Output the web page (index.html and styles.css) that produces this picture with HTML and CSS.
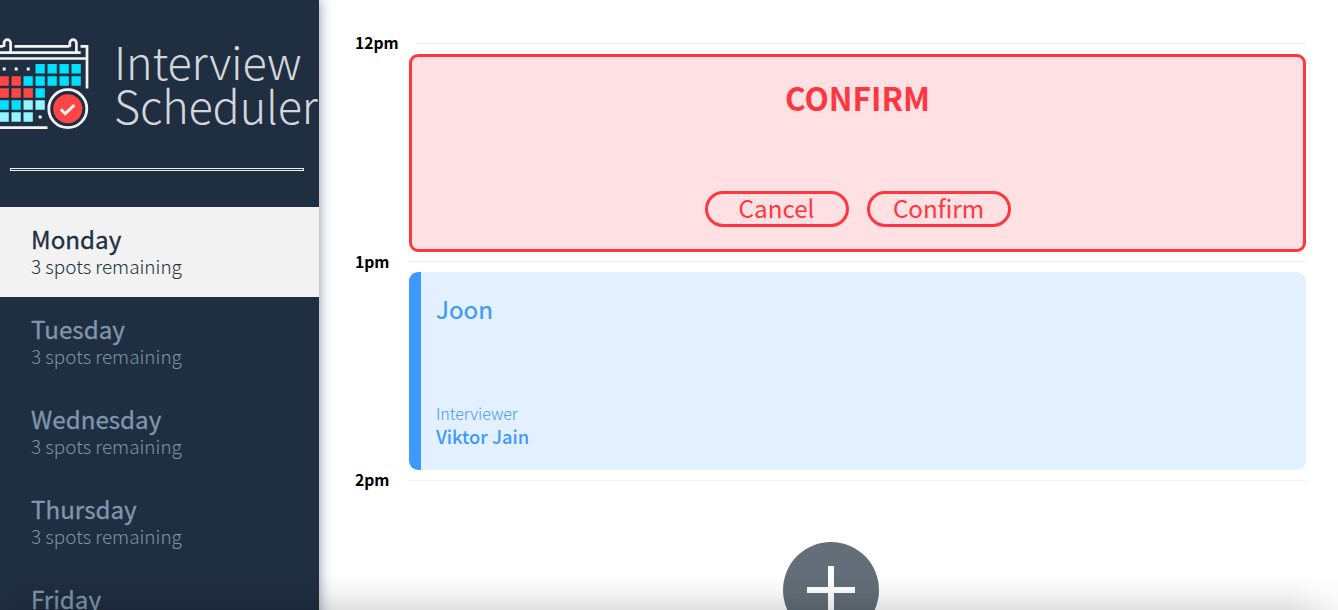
FILE: index.html
```html
<!DOCTYPE html>
<html lang="en">
<head>
<meta charset="utf-8">
<title>Interview Scheduler</title>
<link rel="stylesheet" href="styles.css">
</head>
<body>
<div class="layout">
  <aside class="sidebar">
    <svg class="logo" width="319" height="110" viewBox="0 30 319 110" role="img" aria-label="Interview Scheduler">
      <g fill="none" stroke="#f2f2f2" stroke-width="2.7">
        <path d="M0 46.3H3M14.5 46.3H69.5M80.5 46.3H87V88.5M0 52.7H80.7M0 58.5H86M0 127.7H47.5"/>
        <path d="M4 47V43a3.3 3.3 0 0 1 6.600 0V52M69.800 47V43a3.300 3.300 0 0 1 6.600 0V52"/>
      </g>
      <g fill="#f2f2f2"><path d="M2.700 67.500h3v3h-3zM14.700 67.500h3v3h-3zM26.700 67.500h3v3h-3zM38.700 115.500h3v3h-3z"/></g>
      <path fill="#00e1ff" d="M35.500 64h9.300v9.600h-9.300zM47.500 64h9.300v9.600h-9.300zM59.500 64h9.300v9.600h-9.300zM71.500 64h9.300v9.600h-9.300zM23.500 76.200h9.300v9.600h-9.300zM35.500 76.200h9.300v9.600h-9.300zM47.500 76.200h9.300v9.600h-9.300zM59.500 76.200h9.300v9.600h-9.300zM71.500 76.200h9.300v9.600h-9.300zM35.500 88.200h9.300v9.600h-9.300zM0 100.200h8.800v9.600h-8.800zM11.500 100.200h9.300v9.600h-9.300z"/>
      <path fill="#ff4545" d="M0 76.200h8.800v9.600h-8.800zM11.500 76.200h9.300v9.600h-9.300zM0 88.200h8.800v9.600h-8.800zM11.500 88.200h9.300v9.600h-9.300zM23.500 88.200h9.300v9.600h-9.300z"/>
      <path fill="#93f5ff" d="M23.500 100.200h9.300v9.600h-9.300zM35.500 100.200h9.300v9.600h-9.300zM0 112.200h8.800v9.600h-8.800zM11.500 112.200h9.300v9.600h-9.300zM23.500 112.200h9.300v9.600h-9.300z"/>
      <circle cx="67.800" cy="108.700" r="19" fill="#202e41" stroke="#f2f2f2" stroke-width="2.800"/>
      <circle cx="67.800" cy="108.700" r="14.500" fill="#ff4545"/>
      <path d="M60.800 109.300L65.300 113.700L74.300 105" fill="none" stroke="#f2f2f2" stroke-width="3"/>
      <text class="logo-text" x="114" y="80" textLength="187.500">Interview</text>
      <text class="logo-text" x="114" y="123.500" textLength="204">Scheduler</text>
    </svg>
    <hr class="separator">
    <nav class="days">
      <div class="day day-selected"><div class="day-name">Monday</div><div class="day-spots">3 spots remaining</div></div>
      <div class="day"><div class="day-name">Tuesday</div><div class="day-spots">3 spots remaining</div></div>
      <div class="day"><div class="day-name">Wednesday</div><div class="day-spots">3 spots remaining</div></div>
      <div class="day"><div class="day-name">Thursday</div><div class="day-spots">3 spots remaining</div></div>
      <div class="day"><div class="day-name">Friday</div></div>
    </nav>
  </aside>
  <main class="schedule">
    <div class="time time-first"><span>12pm</span><i class="rule"></i></div>
    <section class="card confirm">
      <h1 class="confirm-title">CONFIRM</h1>
      <div class="actions"><button class="button">Cancel</button><button class="button">Confirm</button></div>
    </section>
    <div class="time time-raised"><span>1pm</span><i class="rule"></i></div>
    <section class="card appointment">
      <h2 class="student">Joon</h2>
      <div class="label">Interviewer</div>
      <div class="interviewer">Viktor Jain</div>
    </section>
    <div class="time"><span>2pm</span><i class="rule"></i></div>
    <div class="empty">
      <svg width="96" height="96" viewBox="0 0 96 96"><circle cx="48" cy="48" r="48" fill="#636e78"/><path d="M48 24V72M24 48H72" stroke="#fff" stroke-width="6"/></svg>
    </div>
  </main>
</div>
<div class="bottom-shade"></div>
</body>
</html>
```
FILE: styles.css
```css
* { box-sizing: border-box; }
body { margin: 0; height: 610px; overflow: hidden; background: #fff; font-family: "Noto Sans CJK SC", "Noto Sans CJK JP", sans-serif; }
.layout { display: flex; height: 610px; overflow: hidden; }
.sidebar { flex: none; width: 319px; height: 720px; padding-top: 30px; background: #202e41; box-shadow: 0 0 12px rgba(20, 30, 50, .5); }
.logo { display: block; }
.logo-text { font-size: 45px; font-weight: 300; fill: #d3d6da; }
.separator { margin: 28px 15px 36px 10px; height: 3px; border: 1px solid #f2f2f2; }
.day { height: 90px; padding: 15px 31px 0; color: #7f97ad; }
.day-selected { background: #f2f2f2; color: #202e41; }
.day-name { font-size: 24.200px; line-height: 33px; font-weight: 400; -webkit-text-stroke: .3px currentColor; }
.day-spots { font-size: 18.900px; font-weight: 300; line-height: 22px; }
.day:not(.day-selected) .day-spots { color: #7c94a4; }
.schedule { flex: 1; padding: 32px 32px 0 36px; }
.time { display: flex; align-items: center; height: 20px; font-size: 15.700px; line-height: 20px; font-weight: 700; color: #000; }
.time span { width: 53px; }
.time-first { height: 22px; }
.time-first span { width: 62px; }
.time-raised { height: 19px; margin-bottom: 1px; }
.time-raised span { margin-top: 1px; }
.rule { flex: 1; height: 1px; background: #efefef; }
.card { margin-left: 54px; height: 198px; border-radius: 9px; }
.confirm { border: 3px solid #ff363f; background: #ffe1e3; color: #ff363f; text-align: center; }
.confirm-title { margin: 18px 0 0; font-size: 31.600px; line-height: 44px; font-weight: 700; }
.actions { display: flex; justify-content: center; gap: 18px; margin-top: 72px; }
.button { width: 144px; height: 36px; padding: 0 0 2px; border: 3px solid #ff363f; border-radius: 18px; background: transparent; color: inherit; font-family: inherit; font-size: 24.200px; line-height: 28px; }
.appointment { border-left: 12px solid #3d98ff; background: #e2f0ff; color: #3d98ff; padding: 19px 15px 0; }
.student { margin: 0 0 77px; font-size: 24.200px; line-height: 36px; font-weight: 400; -webkit-text-stroke: .2px currentColor; }
.label { font-size: 16px; line-height: 18px; font-weight: 300; }
.interviewer { font-size: 18.300px; line-height: 28px; font-weight: 500; }
.empty { padding: 52px 0 0 428px; }
.bottom-shade { position: absolute; left: 0; right: 0; bottom: 0; height: 36px; background: linear-gradient(rgba(0,0,0,0), rgba(0,0,0,.04) 50%, rgba(0,0,0,.12)); -webkit-mask-image: linear-gradient(90deg, rgba(0,0,0,.4), #000 40px, #000 calc(100% - 50px), rgba(0,0,0,.3)); pointer-events: none; }
```
